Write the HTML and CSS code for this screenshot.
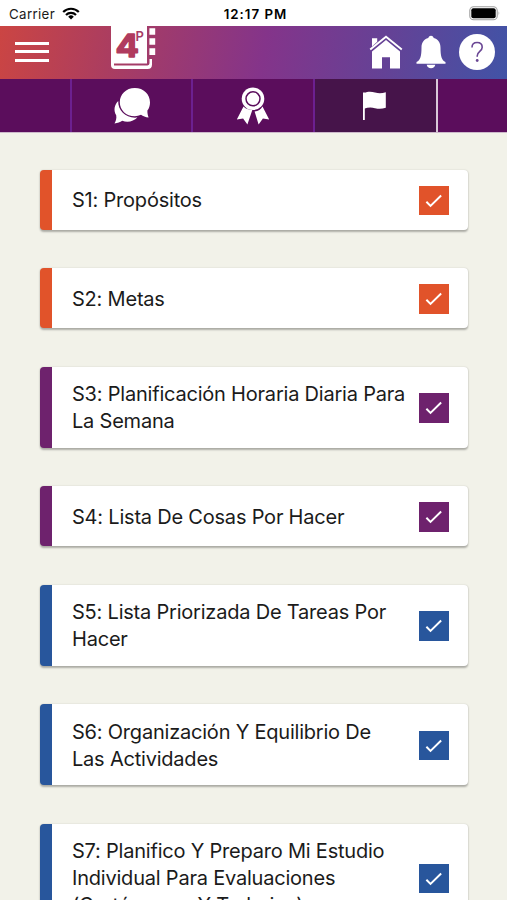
FILE: index.html
```html
<!DOCTYPE html>
<html lang="es">
<head>
  <meta charset="UTF-8">
  <meta name="viewport" content="width=device-width, initial-scale=1">
  <title>4P</title>
  <link rel="stylesheet" href="styles.css">
</head>
<body>

  <div class="status">
    <div class="carrier">
      <span>Carrier</span>
      <svg width="18" height="13" viewBox="0 0 18 13">
        <g fill="none" stroke="#000" stroke-width="2.2">
          <path d="M1.2 5a11 11 0 0 1 15.6 0"/>
          <path d="M4 8a7.1 7.1 0 0 1 10 0"/>
        </g>
        <path d="M6.2 9.7a4 4 0 0 1 5.6 0L9 12.6z"/>
      </svg>
    </div>
    <span class="clock">12:17 PM</span>
    <svg class="battery" width="32" height="15" viewBox="0 0 32 15">
      <rect x=".8" y=".8" width="27.4" height="12.9" rx="3.8" fill="#fff" stroke="#a0a0a0" stroke-width="1.1"/>
      <rect x="2.3" y="2.3" width="24.4" height="9.9" rx="2"/>
      <path d="M29.6 5.2q1.7 2 0 4.2z" fill="#999"/>
    </svg>
  </div>

  <header class="topbar">
    <button class="menu"><span></span><span></span><span></span></button>
    <svg class="logo" width="46" height="44" viewBox="0 0 46 44">
      <path d="M0 0h36v37.500H3v2h33.500q2-.3 2-2.300V33H41v5.500q0 4.500-4.500 4.500H4Q0 43 0 39z" fill="#fff"/>
      <path d="M38.400 2.200h5.800v6.600h-5.800zM38.400 12.200h5.800v6.600h-5.800zM38.400 22.200h5.800v6.900h-5.800z" fill="#fff"/>
      <text class="four" x="4.500" y="31" textLength="23.500" lengthAdjust="spacingAndGlyphs">4</text>
      <text class="pe" x="24.500" y="15">P</text>
    </svg>
    <nav class="actions">
      <svg width="34" height="34" viewBox="0 0 34 34" fill="#fff">
        <path d="M3 3.200h5.200v3.600L3 11.500z"/>
        <path d="M1.200 14.600 17 1.800l15.800 12.800" fill="none" stroke="#fff" stroke-width="1.900"/>
        <path d="M17 5 31 16.400V33.500H21V22.300H13V33.500H3V16.400z"/>
      </svg>
      <svg width="30" height="34" viewBox="0 0 30 34" fill="#fff">
        <path d="M15 .8c1.600 0 2.500 1 2.700 2.300 4.500 1.300 6.800 4.600 6.800 9.700 0 8 1 12.500 5 14.300v1.600H.5v-1.600c4-1.800 5-6.300 5-14.300 0-5.100 2.300-8.400 6.800-9.700C12.500 1.800 13.400.8 15 .8z"/>
        <path d="M10.700 29.800h8.600c-.4 2.300-2 3.500-4.300 3.500s-3.900-1.200-4.300-3.500z"/>
      </svg>
      <svg width="36" height="36" viewBox="0 0 36 36">
        <circle cx="18" cy="18" r="18" fill="#fff"/>
        <path d="M13 13.500c0-3 2-5 5.100-5s5.100 1.900 5.100 4.700c0 4.300-5 4.200-5 8.700v.8" fill="none" stroke="#6a4694" stroke-width="1.600"/>
        <circle cx="18.200" cy="26.500" r="1.400" fill="#6a4694"/>
      </svg>
    </nav>
  </header>

  <nav class="tabs">
    <div class="tab"></div>
    <div class="tab">
      <svg width="38" height="38" viewBox="0 0 38 38" fill="#fff">
        <path d="M5.200 14C1.300 18 .3 23.500 3.200 28.300c.5 3-.2 5.600-1.700 8.200 3.300-.3 5.600-1.200 7.700-2.700 5.700 2 11.500.6 15.200-3.300C13.500 31.800 4.800 24 5.200 14z"/>
        <path d="M21.800 1C30.700 1 37 7.300 37 15.400c0 3.100-1 5.900-2.600 8.200-.1 2.500.3 4.800 1.200 7-3-.4-5.600-1.400-7.600-2.800-2 .9-4 1.400-6.200 1.400C13 29.200 6.800 23 6.800 15.200S13 1 21.800 1z"/>
      </svg>
    </div>
    <div class="tab">
      <svg width="34" height="40" viewBox="0 0 34 40" fill="#fff">
        <path d="M7.500 20.500.8 33.400l6.300-.8 4.300 6 5-14.800c-4 0-7-1.200-8.900-3.300zM26.500 20.500l6.700 12.900-6.300-.8-4.300 6-4-13c3.800-.6 6.200-2.200 7.900-5.100z"/>
        <circle cx="17" cy="12.800" r="11.300"/>
        <circle cx="17" cy="12.800" r="7" fill="none" stroke="#5b0d5c" stroke-width="1.500"/>
      </svg>
    </div>
    <div class="tab active">
      <svg width="26" height="30" viewBox="0 0 26 30" fill="#fff">
        <path d="M1 1.500h1.800V29H1z"/>
        <path d="M2 2c4-1.700 7.500-1.500 11-.5 3.700 1 7 .8 10.800-.2v15.500c-3.800 1.300-7 1.400-10.800.4-3.500-1-7-.9-11 .5z"/>
      </svg>
    </div>
    <div class="tab last"></div>
  </nav>

  <main class="list">
    <div class="card orange">
      <p>S1: Propósitos</p>
      <i class="check"><svg viewBox="0 0 30 30"><path d="m7.500 16 4.200 4.200L22.500 9.700"/></svg></i>
    </div>
    <div class="card orange">
      <p>S2: Metas</p>
      <i class="check"><svg viewBox="0 0 30 30"><path d="m7.500 16 4.200 4.200L22.500 9.700"/></svg></i>
    </div>
    <div class="card purple">
      <p>S3: Planificación Horaria Diaria Para<br>La Semana</p>
      <i class="check"><svg viewBox="0 0 30 30"><path d="m7.500 16 4.200 4.200L22.500 9.700"/></svg></i>
    </div>
    <div class="card purple">
      <p>S4: Lista De Cosas Por Hacer</p>
      <i class="check"><svg viewBox="0 0 30 30"><path d="m7.500 16 4.200 4.200L22.500 9.700"/></svg></i>
    </div>
    <div class="card blue">
      <p>S5: Lista Priorizada De Tareas Por<br>Hacer</p>
      <i class="check"><svg viewBox="0 0 30 30"><path d="m7.500 16 4.200 4.200L22.500 9.700"/></svg></i>
    </div>
    <div class="card blue">
      <p>S6: Organización Y Equilibrio De<br>Las Actividades</p>
      <i class="check"><svg viewBox="0 0 30 30"><path d="m7.500 16 4.200 4.200L22.500 9.700"/></svg></i>
    </div>
    <div class="card blue">
      <p>S7: Planifico Y Preparo Mi Estudio<br>Individual Para Evaluaciones<br>(Certámenes Y Trabajos)</p>
      <i class="check"><svg viewBox="0 0 30 30"><path d="m7.500 16 4.200 4.200L22.500 9.700"/></svg></i>
    </div>
  </main>

</body>
</html>
```

FILE: styles.css
```css
* {
  box-sizing: border-box;
}
body {
  margin: 0;
  height: 900px;
  overflow: hidden;
  background: #f2f2e9;
  color: #1b1b1b;
  font-family: Inter, "Liberation Sans", sans-serif;
}
svg {
  display: block;
  flex: none;
}
.status {
  display: grid;
  grid-template-columns: 1fr auto 1fr;
  align-items: center;
  height: 25.5px;
  padding: 2px 6px 0 9px;
  background: #fff;
  font-size: 13.3px;
}
.carrier {
  display: flex;
  align-items: center;
  gap: 7px;
  letter-spacing: .35px;
}
.clock {
  padding-left: 1px;
  font-size: 13.3px;
  font-weight: 600;
  letter-spacing: 1px;
  color: #000;
}
.battery {
  justify-self: end;
}
.topbar {
  display: flex;
  align-items: flex-start;
  height: 53.5px;
  padding: 0 12px 0 15px;
  background: linear-gradient(100deg, #cb4543 0%, #ab3d60 22%, #84348a 52%, #644296 76%, #4153a6 100%);
}
.menu {
  display: flex;
  flex-direction: column;
  gap: 5.5px;
  width: 34px;
  margin-top: 16px;
  padding: 0;
  border: none;
  background: none;
}
.menu span {
  height: 3px;
  background: #fff;
}
.logo {
  margin-left: 62px;
}
.four {
  font: 700 31px Inter, sans-serif;
  fill: #b03b5e;
  stroke: #b03b5e;
  stroke-width: 1.4;
  stroke-linejoin: round;
}
.pe {
  font: 600 13px Inter, sans-serif;
  fill: #a83b66;
}
.actions {
  display: flex;
  align-items: center;
  gap: 13px;
  height: 53px;
  margin-left: auto;
}
.tabs {
  display: grid;
  grid-template-columns: 72px 121px 122px 122.5px 1fr;
  height: 54px;
  background: #5b0d5c;
  border-bottom: 1px solid #cdb9cb;
}
.tab {
  display: flex;
  align-items: center;
  justify-content: center;
  border-right: 2px solid #6c2090;
}
.tab.active {
  background: #46144a;
  border-color: #d8c8d8;
}
.tab.last {
  border: none;
}
.list {
  display: flex;
  flex-direction: column;
  gap: 38.5px;
  padding: 36.8px 39px 0 40px;
}
.card {
  display: flex;
  flex: none;
  align-items: center;
  justify-content: space-between;
  min-height: 60px;
  padding: 13.5px 19.5px 13.5px 20px;
  border-left: 12.5px solid;
  border-radius: 4px;
  background: #fff;
  box-shadow: 0 1.5px 2px rgba(0, 0, 0, .28), 0 0 2px rgba(0, 0, 0, .1);
}
.card p {
  margin: 1px 0 -1px;
  color: #1b1b1b;
  font-size: 20px;
  letter-spacing: -.21px;
  line-height: 27px;
  white-space: nowrap;
}
.check {
  width: 29.5px;
  height: 29.5px;
  flex: none;
  margin-top: 1px;
  background: currentColor;
}
.check path {
  fill: none;
  stroke: #fff;
  stroke-width: 2;
}
.orange {
  border-color: #e1532a;
  color: #e1532a;
}
.purple {
  border-color: #6e226d;
  color: #6e226d;
}
.blue {
  border-color: #28569c;
  color: #28569c;
}
```
